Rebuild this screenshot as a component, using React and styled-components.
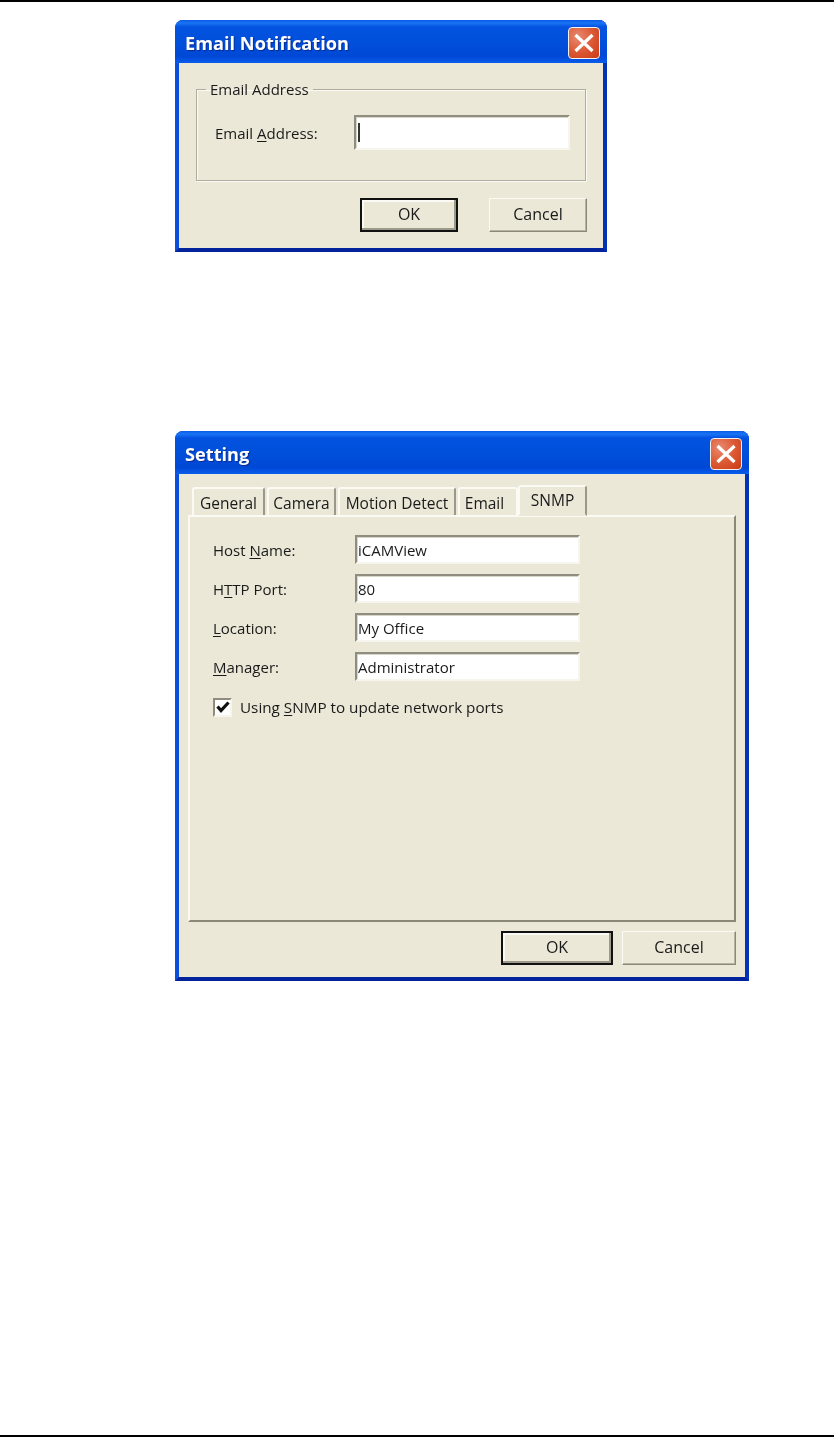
import React from 'react';
import styled, { createGlobalStyle } from 'styled-components';

const GlobalStyle = createGlobalStyle`
  html, body {
    margin: 0;
    padding: 0;
    background: #fff;
  }
  * {
    box-sizing: border-box;
  }
`

const Page = styled.div`
  width: 834px;
  height: 1437px;
  display: flex;
  flex-direction: column;
  border-top: 2px solid #000;
  border-bottom: 2px solid #000;
  font-family: "Open Sans", "Liberation Sans", sans-serif;
  color: #1a1a1a;
`

const Window = styled.div`
  width: ${props => props.$width}px;
  height: ${props => props.$height}px;
  margin-top: ${props => props.$top}px;
  margin-left: 175px;
  display: flex;
  flex-direction: column;
  border-radius: 8px 8px 0 0;
  background: #0a4ed8;
  border-left: 4px solid #0a50dc;
  border-right: 4px solid #0333b4;
  border-bottom: 4px solid #02239c;
  filter: blur(0.35px);
`

const TitleBar = styled.div`
  height: 43px;
  margin: 0 -4px;
  padding: 3px 7px 0 10px;
  display: flex;
  align-items: center;
  justify-content: space-between;
  border-radius: 8px 8px 0 0;
  background: linear-gradient(180deg, #0a5be8 0%, #1a74f4 7%, #0453e0 16%, #0050dc 50%, #0048d6 85%, #0a5cec 100%);
`

const Title = styled.span`
  font-family: "Open Sans", "Noto Sans", sans-serif;
  font-size: 18.2px;
  font-weight: 700;
  color: #fff;
  text-shadow: 1px 1px 1px #0a2a90;
`

const CloseButton = styled.div`
  width: 32px;
  height: 32px;
  display: flex;
  align-items: center;
  justify-content: center;
  border: 1px solid #f2f2f2;
  border-radius: 4px;
  background: radial-gradient(circle at 30% 30%, #e88a70 0%, #dc5a35 50%, #c93a12 100%);
`

const Client = styled.div`
  flex: 1;
  display: flex;
  flex-direction: column;
  background: #ebe8d8;
`

const GroupBox = styled.fieldset`
  width: 390px;
  height: 101px;
  margin: 17px 0 0 17px;
  padding: 0;
  border: 1px solid #aeac9c;
  box-shadow: 1px 1px 0 #fbfaf4, inset 1px 1px 0 #fbfaf4;
  min-inline-size: 0;
`

const Legend = styled.legend`
  margin-left: 9px;
  padding: 0 4px;
  font-size: 15px;
  line-height: 18px;
`

const FormRow = styled.div`
  display: flex;
  align-items: center;
  height: ${props => props.$height}px;
  margin-top: ${props => props.$top || 0}px;
  margin-left: ${props => props.$left || 0}px;
`

const Label = styled.label`
  width: ${props => props.$width}px;
  flex: none;
  font-size: 15px;
  padding-top: 1px;

  u {
    text-underline-offset: 2px;
  }
`

const TextField = styled.div`
  width: ${props => props.$width}px;
  height: ${props => props.$height}px;
  display: flex;
  align-items: center;
  padding-left: 0;
  font-size: 15px;
  background: #fff;
  border-top: 2px solid #8f8d80;
  border-left: 2px solid #8f8d80;
  border-right: 2px solid #f6f5ee;
  border-bottom: 2px solid #f6f5ee;
  box-shadow: inset 1px 1px 0 #d8d6c8;
  text-indent: 1px;
`

const Caret = styled.span`
  width: 2px;
  height: 19px;
  margin-left: 2px;
  background: #333;
`

const ButtonRow = styled.div`
  display: flex;
  justify-content: flex-end;
  gap: ${props => props.$gap}px;
  margin-top: ${props => props.$top}px;
  margin-right: ${props => props.$right}px;
`

const Button = styled.div`
  width: ${props => props.$width}px;
  height: 34px;
  padding-bottom: 2px;
  display: flex;
  align-items: center;
  justify-content: center;
  font-size: 16px;
  background: #ebe8d8;
  border: ${props => props.$primary ? '2px solid #111' : '1px solid #fbfaf4'};
  border-right-color: ${props => props.$primary ? '#111' : '#8a8878'};
  border-bottom-color: ${props => props.$primary ? '#111' : '#8a8878'};
  box-shadow: ${props => props.$primary
    ? 'inset -2px -2px 0 #9c9a8a, inset 2px 2px 0 #faf9f3'
    : 'inset -1px -1px 0 #b5b3a3'};
`

const TabStrip = styled.div`
  display: flex;
  align-items: flex-end;
  height: 41px;
  margin-left: 13px;
  gap: 2px;
  position: relative;
  z-index: 1;
`

const Tab = styled.div`
  width: ${props => props.$width}px;
  height: ${props => props.$active ? 31 : 28}px;
  display: flex;
  align-items: center;
  justify-content: center;
  padding-right: ${props => props.$light ? 7 : 0}px;
  padding-top: ${props => props.$active ? 0 : 1}px;
  padding-bottom: ${props => props.$active ? 2 : 0}px;
  font-size: 15.5px;
  background: #ebe8d8;
  border-top: 2px solid #fbfaf4;
  border-left: 2px solid #fbfaf4;
  border-right: 2px solid ${props => props.$light ? '#fbfaf4' : '#9a9888'};
  border-radius: 3px 3px 0 0;
  margin-left: ${props => props.$active ? -2 : 0}px;
  margin-bottom: ${props => props.$active ? -1 : 0}px;
  border-bottom: ${props => props.$active ? '2px solid #ebe8d8' : 'none'};
`

const TabPanel = styled.div`
  width: 548px;
  height: 407px;
  margin-left: 9px;
  padding: 18px 0 0 23px;
  border-top: 2px solid #fbfaf4;
  border-left: 2px solid #fbfaf4;
  border-right: 2px solid #8a8878;
  border-bottom: 2px solid #8a8878;
`

const CheckRow = styled.div`
  display: flex;
  align-items: center;
  gap: 8px;
  margin-top: 16px;
  font-size: 15.25px;

  u {
    text-underline-offset: 2px;
  }
`

const CheckBox = styled.div`
  width: 19px;
  height: 19px;
  display: flex;
  align-items: center;
  justify-content: center;
  background: #fff;
  border-top: 2px solid #8f8d80;
  border-left: 2px solid #8f8d80;
  border-right: 2px solid #f6f5ee;
  border-bottom: 2px solid #f6f5ee;
`

const CloseIcon = () => (
  <svg width="22" height="20" viewBox="0 0 22 20">
    <path d="M2.5 2 L19.5 18 M19.5 2 L2.5 18" stroke="#fff" strokeWidth="3.2" fill="none" />
  </svg>
)

const CheckIcon = () => (
  <svg width="14" height="14" viewBox="0 0 14 14">
    <path d="M1.5 6.5 L5 10.5 L12.5 2.5" stroke="#111" strokeWidth="3.2" fill="none" />
  </svg>
)

const App = () => {
  return (
    <Page>
      <GlobalStyle />
      <Window $width={432} $height={232} $top={18}>
        <TitleBar>
          <Title>Email Notification</Title>
          <CloseButton><CloseIcon /></CloseButton>
        </TitleBar>
        <Client>
          <GroupBox>
            <Legend>Email Address</Legend>
            <FormRow $height={35} $top={17} $left={18}>
              <Label $width={139}>Email <u>A</u>ddress:</Label>
              <TextField $width={216} $height={35}><Caret /></TextField>
            </FormRow>
          </GroupBox>
          <ButtonRow $gap={31} $top={17} $right={16}>
            <Button $width={98} $primary>OK</Button>
            <Button $width={98}>Cancel</Button>
          </ButtonRow>
        </Client>
      </Window>

      <Window $width={574} $height={550} $top={179}>
        <TitleBar>
          <Title>Setting</Title>
          <CloseButton><CloseIcon /></CloseButton>
        </TitleBar>
        <Client>
          <TabStrip>
            <Tab $width={73}>General</Tab>
            <Tab $width={69}>Camera</Tab>
            <Tab $width={118}>Motion Detect</Tab>
            <Tab $width={60} $light>Email</Tab>
            <Tab $width={69} $active>SNMP</Tab>
          </TabStrip>
          <TabPanel>
            <FormRow $height={29}>
              <Label $width={142}>Host <u>N</u>ame:</Label>
              <TextField $width={225} $height={29}>iCAMView</TextField>
            </FormRow>
            <FormRow $height={29} $top={10}>
              <Label $width={142}>H<u>T</u>TP Port:</Label>
              <TextField $width={225} $height={29}>80</TextField>
            </FormRow>
            <FormRow $height={29} $top={10}>
              <Label $width={142}><u>L</u>ocation:</Label>
              <TextField $width={225} $height={29}>My Office</TextField>
            </FormRow>
            <FormRow $height={29} $top={10}>
              <Label $width={142}><u>M</u>anager:</Label>
              <TextField $width={225} $height={29}>Administrator</TextField>
            </FormRow>
            <CheckRow>
              <CheckBox><CheckIcon /></CheckBox>
              <span>Using <u>S</u>NMP to update network ports</span>
            </CheckRow>
          </TabPanel>
          <ButtonRow $gap={9} $top={9} $right={9}>
            <Button $width={112} $primary>OK</Button>
            <Button $width={114}>Cancel</Button>
          </ButtonRow>
        </Client>
      </Window>
    </Page>
  );
}

export default App;
